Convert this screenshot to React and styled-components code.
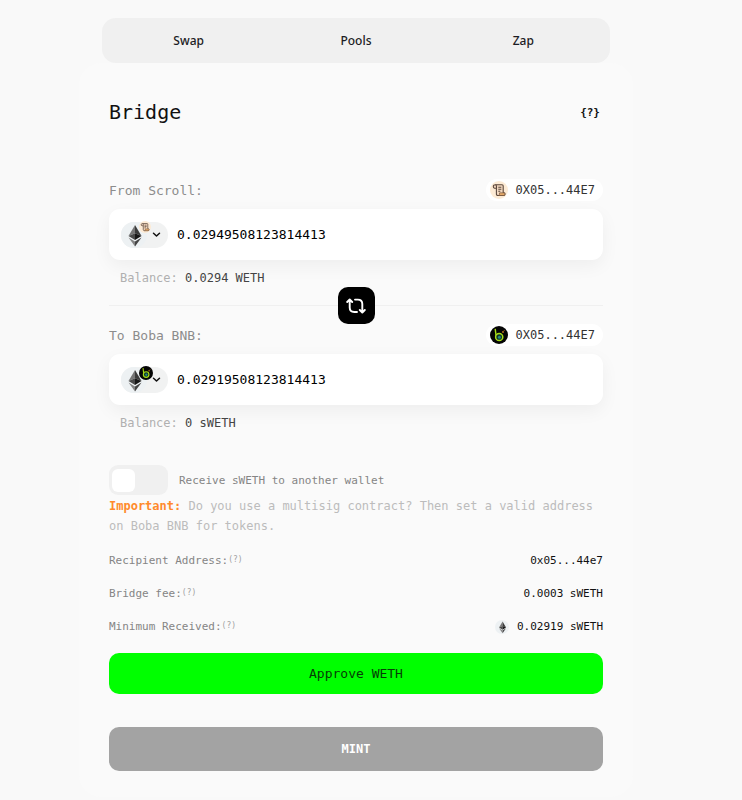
import React, { useState } from 'react';
import styled, { createGlobalStyle } from 'styled-components';

const GlobalStyle = createGlobalStyle`
    * {
        box-sizing: border-box;
    }

    body {
        margin: 0;
        background: #f9f9f9;
        color: #111;
        font-family: 'DejaVu Sans Mono', 'Liberation Mono', monospace;
        font-size: 12px;
    }

    button, input {
        font-family: inherit;
        color: inherit;
    }
`;

const Page = styled.div`
    display: flex;
    flex-direction: column;
    align-items: center;
    padding: 18px 30px 3px 0;
`;

const Nav = styled.nav`
    display: flex;
    width: 100%;
    max-width: 508px;
    padding: 0 3px;
    border-radius: 14px;
    background: #f0f0f0;
`;

const NavLink = styled.a`
    flex: 1;
    line-height: 45px;
    text-align: center;
    text-decoration: none;
    font-family: 'Noto Sans', 'Open Sans', sans-serif;
    font-size: 12px;
    font-weight: 500;
    color: #1c1c24;
`;

const Card = styled.main`
    width: 100%;
    max-width: 554px;
    padding: 33px 30px 26px;
    border-radius: 22px;
    background: #fafafa;
`;

const CardHeader = styled.header`
    display: flex;
    align-items: center;
    justify-content: space-between;
    margin-bottom: 51px;
`;

const Title = styled.h1`
    margin: 0;
    font-size: 20px;
    line-height: 32px;
    font-weight: 400;
`;

const HelpButton = styled.button`
    padding: 0 3px;
    border: 0;
    background: none;
    font-size: 11px;
    font-weight: 700;
`;

const SideHeader = styled.div`
    display: flex;
    align-items: center;
    justify-content: space-between;
    margin-bottom: 8px;
`;

const SideLabel = styled.label`
    padding-top: 2px;
    font-size: 13px;
    line-height: 20px;
    color: #8c8c8c;
`;

const WalletChip = styled.span`
    display: flex;
    align-items: center;
    gap: 8px;
    height: 22px;
    padding: 0 8px 0 4px;
    border-radius: 11px;
    background: #fff;
    color: #333;
`;

const AmountBox = styled.div`
    display: flex;
    align-items: center;
    gap: 9px;
    height: 51px;
    padding: 0 12px;
    border-radius: 11px;
    background: #fff;
    box-shadow: 0 6px 18px rgba(0, 0, 0, 0.05);
`;

const TokenButton = styled.button`
    position: relative;
    display: flex;
    flex-shrink: 0;
    align-items: center;
    gap: 5px;
    height: 26px;
    padding: 0 7px 0 0;
    border: 0;
    border-radius: 13px;
    background: #f1f2f2;
`;

const TokenBadge = styled.span`
    position: absolute;
    top: -1px;
    left: 18px;
    display: flex;
`;

const AmountInput = styled.input`
    flex: 1;
    min-width: 0;
    padding: 0;
    border: 0;
    outline: 0;
    background: none;
    font-size: 13px;
    color: #000;
`;

const Balance = styled.p`
    margin: 10px 0 0;
    padding-left: 11px;
    line-height: 17px;
    color: #b0b0b0;

    span {
        color: #444;
    }
`;

const Divider = styled.div`
    display: flex;
    align-items: center;

    &::before, &::after {
        content: '';
        flex: 1;
        height: 1px;
        background: #f0f0f0;
    }
`;

const SwapButton = styled.button`
    display: flex;
    align-items: center;
    justify-content: center;
    width: 37px;
    height: 37px;
    padding: 0;
    border: 0;
    border-radius: 10px;
    background: #000;
`;

const ToggleRow = styled.label`
    display: flex;
    align-items: center;
    gap: 11px;
    margin-top: 33px;
    font-size: 11px;
    color: #858585;
`;

const Toggle = styled.input`
    appearance: none;
    display: flex;
    align-items: center;
    width: 59px;
    height: 30px;
    margin: 0;
    padding: 0 3px;
    border-radius: 9px;
    background: #f0f0f0;

    &::before {
        content: '';
        width: 23px;
        height: 23px;
        border-radius: 6px;
        background: #fff;
    }

    &:checked {
        justify-content: flex-end;
        background: #0f0;
    }
`;

const Notice = styled.p`
    margin: 1px 0 8px;
    line-height: 20px;
    color: #bcbcbc;

    strong {
        color: #ff8a2b;
    }
`;

const Details = styled.dl`
    margin: 0 0 10px;
`;

const DetailRow = styled.div`
    display: flex;
    align-items: center;
    justify-content: space-between;
    height: 33px;
    font-size: 11px;
`;

const DetailName = styled.dt`
    color: #858585;

    sup {
        font-size: 8px;
        line-height: 0;
        vertical-align: 2px;
        color: #a0a0a0;
    }
`;

const DetailValue = styled.dd`
    display: flex;
    align-items: center;
    gap: 8px;
    margin: 0;
`;

const ActionButton = styled.button`
    display: block;
    width: 100%;
    height: ${({ $muted }) => ($muted ? '44px' : '41px')};
    margin-top: ${({ $muted }) => ($muted ? '33px' : '0')};
    padding: 0;
    border: 0;
    border-radius: 10px;
    background: ${({ $muted }) => ($muted ? '#a3a3a3' : '#0f0')};
    font-size: ${({ $muted }) => ($muted ? '12px' : '13px')};
    font-weight: ${({ $muted }) => ($muted ? 700 : 400)};
    color: ${({ $muted }) => ($muted ? '#fff' : '#063d06')};
`;

const EthIcon = ({ size }) => (
    <svg width={size} height={size} viewBox="0 0 26 26" aria-hidden="true">
        <circle cx="13" cy="13" r="13" fill="#edf1f3" />
        <path d="M14 3 7.5 14 14 11.2Z" fill="#777" />
        <path d="M14 3 20.5 14 14 11.2Z" fill="#3b3b3b" />
        <path d="M7.5 14 14 11.2V18Z" fill="#4a4a4a" />
        <path d="M20.5 14 14 11.2V18Z" fill="#171717" />
        <path d="M7.5 15.5 14 19.5V24.5Z" fill="#858585" />
        <path d="M20.5 15.5 14 19.5V24.5Z" fill="#444" />
    </svg>
);

const ScrollIcon = ({ size }) => (
    <svg width={size} height={size} viewBox="0 0 18 18" aria-hidden="true">
        <circle cx="9" cy="9" r="9" fill="#fdebd5" />
        <path d="M5.5 3.8H12q1.2 0 1.2 1.2v6.8H14q1 0 1 1.3 0 1.4-1.4 1.4H8q-1.6 0-1.6-1.6V7.2H4.5Q3.3 7 3.3 5.6 3.3 3.8 5.5 3.8Z" fill="#f3d8bf" stroke="#5c483d" strokeWidth="1.1" />
        <path d="M5.5 3.8q1 .3 1 1.8v1.6M8.3 6.3h3M8.3 8.3h3M8.3 10.2h2" fill="none" stroke="#5c483d" strokeWidth="1.1" />
        <path d="M9.6 11.8h4.6q.8.2.8 1.3 0 1.4-1.4 1.4H8.4q1.3-.3 1.2-2.7Z" fill="#e5a969" stroke="#6a4b35" strokeWidth=".6" />
    </svg>
);

const BobaIcon = ({ size }) => (
    <svg width={size} height={size} viewBox="0 0 18 18" aria-hidden="true">
        <circle cx="9" cy="9" r="9" fill="#050505" />
        <path d="m5.2 2.8 1 8" stroke="#a7dc18" strokeWidth="1.4" fill="none" />
        <circle cx="9.2" cy="11" r="3.6" stroke="#a7dc18" strokeWidth="1.5" fill="#12352b" />
        <circle cx="9.4" cy="11.2" r="1.5" fill="#238b80" />
        <circle cx="13" cy="6" r="1" fill="#b76e20" />
        <circle cx="14.2" cy="4.4" r=".5" fill="#b76e20" />
    </svg>
);

const ChevronIcon = () => (
    <svg width="9" height="6" viewBox="0 0 9 6" fill="none" stroke="#111" strokeWidth="1.5" strokeLinecap="round" strokeLinejoin="round" aria-hidden="true">
        <path d="m1.5 1.2 3 2.8 3-2.8" />
    </svg>
);

const SwapIcon = () => (
    <svg width="20" height="16" viewBox="0 0 20 16" fill="none" stroke="#fff" strokeWidth="1.9" strokeLinecap="round" strokeLinejoin="round" aria-hidden="true">
        <path d="M3.7 2.2v7.3q0 4.5 4.5 4.5H11M1.2 4l2.5-2.6L6.2 4" />
        <path d="M9 1.6h2.8q4.5 0 4.5 4.5v7.7M13.8 12l2.5 2.6 2.5-2.6" />
    </svg>
);

const BridgeSide = ({ id, label, chain: ChainIcon, badgeSize, amount, balance }) => (
    <section>
        <SideHeader>
            <SideLabel htmlFor={id}>{label}</SideLabel>
            <WalletChip>
                <ChainIcon size={18} />
                0X05...44E7
            </WalletChip>
        </SideHeader>
        <AmountBox>
            <TokenButton type="button" aria-label="Select token">
                <EthIcon size={26} />
                <TokenBadge>
                    <ChainIcon size={badgeSize} />
                </TokenBadge>
                <ChevronIcon />
            </TokenButton>
            <AmountInput id={id} type="text" inputMode="decimal" defaultValue={amount} />
        </AmountBox>
        <Balance>Balance: <span>{balance}</span></Balance>
    </section>
);

const Detail = ({ name, children }) => (
    <DetailRow>
        <DetailName>{name}<sup>(?)</sup></DetailName>
        <DetailValue>{children}</DetailValue>
    </DetailRow>
);

const App = () => {
    const [otherWallet, setOtherWallet] = useState(false);

    return (
        <Page>
            <GlobalStyle />
            <Nav>
                <NavLink href="#swap">Swap</NavLink>
                <NavLink href="#pools">Pools</NavLink>
                <NavLink href="#zap">Zap</NavLink>
            </Nav>
            <Card>
                <CardHeader>
                    <Title>Bridge</Title>
                    <HelpButton type="button">{'{?}'}</HelpButton>
                </CardHeader>
                <BridgeSide
                    id="from-amount"
                    label="From Scroll:"
                    chain={ScrollIcon}
                    badgeSize={12}
                    amount="0.02949508123814413"
                    balance="0.0294 WETH"
                />
                <Divider>
                    <SwapButton type="button" aria-label="Switch direction">
                        <SwapIcon />
                    </SwapButton>
                </Divider>
                <BridgeSide
                    id="to-amount"
                    label="To Boba BNB:"
                    chain={BobaIcon}
                    badgeSize={14}
                    amount="0.02919508123814413"
                    balance="0 sWETH"
                />
                <ToggleRow>
                    <Toggle
                        type="checkbox"
                        checked={otherWallet}
                        onChange={(e) => setOtherWallet(e.target.checked)}
                    />
                    Receive sWETH to another wallet
                </ToggleRow>
                <Notice>
                    <strong>Important:</strong> Do you use a multisig contract? Then set a valid address on Boba BNB for tokens.
                </Notice>
                <Details>
                    <Detail name="Recipient Address:">0x05...44e7</Detail>
                    <Detail name="Bridge fee:">0.0003 sWETH</Detail>
                    <Detail name="Minimum Received:">
                        <EthIcon size={14} />
                        0.02919 sWETH
                    </Detail>
                </Details>
                <ActionButton type="button">Approve WETH</ActionButton>
                <ActionButton type="button" $muted>MINT</ActionButton>
            </Card>
        </Page>
    );
};

export default App;
